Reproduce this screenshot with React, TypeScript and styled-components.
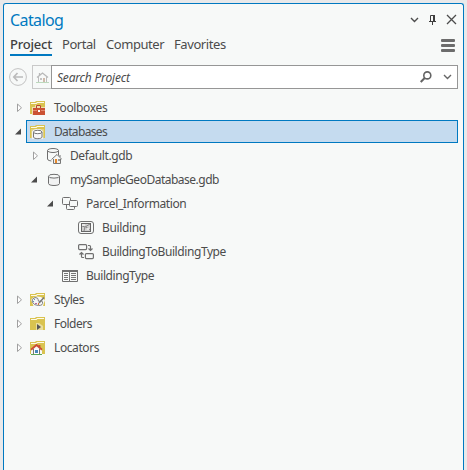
import React from 'react';
import styled, { createGlobalStyle } from 'styled-components';

const GlobalStyle = createGlobalStyle`
  * { box-sizing: border-box; }
  html, body { margin: 0; height: 100%; background: #e9e9ea; overflow: hidden; }
  body { font-family: "Noto Sans", "Open Sans", sans-serif; color: #4c4c4c; }
  #root { height: 100%; }
  svg { display: block; flex: none; }
`;

const Frame = styled.div`
  height: 470px;
  padding: 3px 3px 0 3px;
`;

const Panel = styled.section`
  height: 467px;
  border: 1px solid #0079c1;
  border-bottom: 0;
  border-radius: 3px 3px 0 0;
  background: #f7f9f8;
`;

const TitleBar = styled.header`
  display: flex;
  align-items: center;
  height: 31px;
  padding: 0 6px 0 6px;
`;

const Title = styled.h1`
  flex: 1;
  margin: 0;
  font-size: 16px;
  line-height: 22px;
  font-weight: 400;
  letter-spacing: -0.6px;
  color: #0079c1;
`;

const WindowButtons = styled.div`
  display: flex;
  align-items: center;
  gap: 9px;
`;

const TabBar = styled.nav`
  display: flex;
  height: 23px;
  padding: 0 5px 0 6px;
`;

const Tab = styled.div<{ $width: number; $spacing: number; $active?: boolean }>`
  width: ${p => p.$width}px;
  height: 21px;
  margin-right: 10px;
  white-space: nowrap;
  font-size: 13px;
  line-height: 18px;
  font-weight: ${p => (p.$active ? 500 : 400)};
  letter-spacing: ${p => p.$spacing}px;
  color: ${p => (p.$active ? '#404040' : '#4c4c4c')};
  border-bottom: 2px solid ${p => (p.$active ? '#0079c1' : 'transparent')};
`;

const MenuButton = styled.div`
  margin: 4px 3px 0 auto;
`;

const SearchRow = styled.div`
  display: flex;
  align-items: center;
  height: 24px;
  margin: 7px 5px 7px 5px;
`;

const HomeButton = styled.div`
  display: flex;
  align-items: center;
  justify-content: center;
  width: 19px;
  height: 24px;
  margin-left: 5px;
  border: 1px solid #c9c9c9;
  border-right: 0;
`;

const SearchBox = styled.div`
  display: flex;
  align-items: center;
  flex: 1;
  height: 24px;
  padding: 0 5px;
  border: 1px solid #969696;
  background: #fff;
`;

const Placeholder = styled.span`
  flex: 1;
  padding-top: 1px;
  font-size: 12px;
  line-height: 20px;
  font-style: italic;
  letter-spacing: -0.2px;
  color: #4c4c4c;
`;

const Spacer = styled.div`
  width: 11px;
`;

const Tree = styled.div`
  padding-right: 5px;
`;

const Row = styled.div<{ $depth: number }>`
  display: flex;
  height: 24px;
  padding-left: ${p => 11 + p.$depth * 16}px;
`;

const Toggle = styled.div`
  display: flex;
  align-items: center;
  width: 11px;
`;

const Item = styled.div<{ $selected?: boolean }>`
  display: flex;
  align-items: center;
  flex: 1;
  height: ${p => (p.$selected ? 23 : 24)}px;
  padding-left: 3px;
  border: 1px solid ${p => (p.$selected ? '#0079c1' : 'transparent')};
  background: ${p => (p.$selected ? '#c5dbef' : 'transparent')};
`;

const Label = styled.span<{ $spacing: number }>`
  margin-left: 8px;
  font-size: 12px;
  line-height: 18px;
  letter-spacing: ${p => p.$spacing}px;
  white-space: nowrap;
`;

const Glyph = ({ w = 16, h = 16, children }: { w?: number; h?: number; children: React.ReactNode }) => (
  <svg width={w} height={h} viewBox={`0 0 ${w} ${h}`} fill="none">{children}</svg>
);

const FolderBase = () => (
  <>
    <path d="M0 14V2h5l1-1h9v13z" fill="#d9c350" />
    <path d="M1 3h5l1-1h7v1H7.5L6.5 4H1z" fill="#fffbe6" />
  </>
);

const ToolboxFolder = () => (
  <Glyph><FolderBase />
    <path d="M2 7h3V5h6v2h4v8H2z" fill="#efdfaf" />
    <path d="M3 8h12v7H3z" fill="#cb5234" />
    <path d="M6.5 8V5.5h4V8" stroke="#b84a30" />
    <path d="M3 10.5h4m4 0h4" stroke="#e28a70" />
    <path d="M8 10h2v2H8z" fill="#fff" />
  </Glyph>
);

const Cylinder = () => (
  <>
    <path d="M2.5 4v8.5c0 1.3 2.5 2 5.5 2s5.5-.7 5.5-2V4" fill="#f7f9f8" stroke="#6e6e6e" />
    <ellipse cx="8" cy="4" rx="5.5" ry="2" fill="#f7f9f8" stroke="#6e6e6e" />
  </>
);

const DatabaseFolder = () => (
  <Glyph>
    <FolderBase />
    <path d="M1 5h13v9H1z" fill="#e2d27d" />
    <path d="M2 8c0-4 11-4 11 0v7H2z" fill="#f4f4f4" />
    <path d="M3.5 8v5c0 2.2 8.5 2.2 8.5 0V8" fill="#f7f7f7" stroke="#777" />
    <ellipse cx="7.75" cy="8" rx="4.25" ry="1.7" fill="#fff" stroke="#777" />
  </Glyph>
);

const Database = () => (
  <Glyph>
    <path d="M2.5 4.2v7.3c0 1.3 2.5 2 5.5 2s5.5-.7 5.5-2V4.2" fill="#f1f2f2" stroke="#6e6e6e" />
    <ellipse cx="8" cy="4.2" rx="5.5" ry="1.9" fill="#f7f9f8" stroke="#6e6e6e" />
  </Glyph>
);

const HomeDatabase = () => (
  <Glyph>
    <g transform="translate(-1 -1.5)"><Cylinder /></g>
    <path d="M5 11l6-5 5 5v5H6z" fill="#f7f9f8" />
    <path d="M7.5 11v4.5h7V11" fill="#f0f0f0" stroke="#777" />
    <path d="M5.5 11.5L11 6.5l5 5M14 9V7" stroke="#777" />
    <path d="M9 11h2v4H9z" fill="#e58a2d" />
    <path d="M12 11h2v2h-2z" fill="#999" />
  </Glyph>
);

const Dataset = () => (
  <Glyph>
    <rect x="4.5" y="7.5" width="8" height="6" rx="1" stroke="#707070" />
    <rect x=".5" y="1.5" width="8" height="7" rx="1" fill="#f7f9f8" stroke="#707070" />
    <rect x="7.5" y="4.5" width="8" height="6" rx="1" fill="#f7f9f8" stroke="#707070" />
  </Glyph>
);

const FeatureClass = () => (
  <Glyph>
    <rect x=".5" y="1.5" width="15" height="12" rx="2.5" stroke="#707070" />
    <rect x="3.5" y="3.5" width="9" height="8" fill="#d0d0d0" stroke="#666" />
    <path d="M4 6l3 1 5-3M7 7l-1 4M8 7l4 3" stroke="#858585" />
    <path d="M4 4h3v2H4zM9 8h2v2H9z" fill="#e8e8e8" />
  </Glyph>
);

const Relationship = () => (
  <Glyph>
    <rect x=".6" y=".6" width="8" height="5" rx="1" stroke="#707070" strokeWidth="1.2" />
    <rect x="7.4" y="9.6" width="8" height="5" rx="1" stroke="#707070" strokeWidth="1.2" />
    <path d="M10 1.5h1.5q1 0 1 1V6M10.5 4.5l2 2 2-2M6 13.5H4.5q-1 0-1-1V9M1.5 10.5l2-2 2 2" stroke="#707070" strokeWidth="1.2" />
  </Glyph>
);

const Table = () => (
  <Glyph>
    <path d="M.5 2.5h15v11H.5z" stroke="#707070" />
    <path d="M0 2h16v2H0z" fill="#707070" />
    <path d="M7.5 4v10M2 5.5h4M2 7.5h4M2 9.5h4M2 11.5h4M9 5.5h5M9 7.5h5M9 9.5h5M9 11.5h5" stroke="#777" />
  </Glyph>
);

const StylesFolder = () => (
  <Glyph><FolderBase />
    <path d="M1 8q3-5 10-3l4 3-2 6-9 1z" fill="#f7f9f8" />
    <path d="M5 5.5Q1 7 2.3 10q1.5 3.5 6.2 3.5 5 0 4-3.5-.4-1.7-2.5-.7-2.2.5-1.8-1.6.2-2-3.2-2.2z" fill="#f4f4f4" stroke="#818181" />
    <path d="M9 11l5-5.5" stroke="#777" strokeWidth="1.5" />
    <path d="M4 7h1v1H4zM3 9h1v1H3z" fill="#5f91ba" />
    <path d="M5 11h2v1H5z" fill="#b768a0" /><path d="M8 11h1v2H8z" fill="#d97936" />
  </Glyph>
);

const ProjectFolder = () => (
  <Glyph><FolderBase />
    <path d="M6 7h3l4 3v4H6z" fill="#e9dd9c" /><path d="M7 8l4 3-4 3z" fill="#555" />
  </Glyph>
);

const LocatorFolder = () => (
  <Glyph><FolderBase />
    <path d="M1 10l5-5 6 5v5H1z" fill="#f7f9f8" />
    <path d="M3.5 9v5.5h6V9" fill="#fff" stroke="#777" />
    <path d="M1 9.7L6.5 5l5.5 4.7M9.5 7V5" stroke="#cc4e35" strokeWidth="1.8" />
    <path d="M5 10h3v3H5z" fill="#4689bd" /><path d="M1 14.5h11" stroke="#5da657" />
  </Glyph>
);

const Home = () => (
  <Glyph w={13} h={14}>
    <path d="M2.5 7v5.5h8V7" stroke="#bdbdbd" />
    <path d="M1 7.5L6.5 3 12 7.5M3.5 5V3" stroke="#b8b8b8" strokeWidth="1.3" />
    <path d="M7 8h2v4H7z" fill="#cfb9aa" /><path d="M4 8h2v2H4z" fill="#c3c3c3" />
    <path d="M0 12.5h13" stroke="#bdd9bd" />
  </Glyph>
);

const Back = () => (
  <Glyph w={18} h={18}>
    <circle cx="9" cy="9" r="8.4" stroke="#c2c2c2" />
    <path d="M14 9H5M8.5 5L4.8 9l3.7 4" stroke="#bbb" strokeWidth="1.7" />
  </Glyph>
);

const Chevron = ({ color }: { color: string }) => (
  <Glyph w={9} h={6}><path d="M1 1l3.5 3.5L8 1" stroke={color} strokeWidth="1.4" /></Glyph>
);

const Pin = () => (
  <Glyph w={9} h={12}>
    <path d="M2.5 7V1.5h4V7M1 7.5h7M4.5 8v3" stroke="#3e3e3e" /><path d="M5 1h2v6H5z" fill="#3e3e3e" />
  </Glyph>
);

const Close = () => (
  <Glyph w={11} h={11}><path d="M1 1l9 9M10 1l-9 9" stroke="#4c4c4c" strokeWidth="1.3" /></Glyph>
);

const Menu = () => (
  <Glyph w={14} h={14}>
    <rect width="14" height="3" rx="1" fill="#6c6c6c" />
    <rect y="5" width="14" height="3" rx="1" fill="#6c6c6c" />
    <rect y="10" width="14" height="3" rx="1" fill="#6c6c6c" />
  </Glyph>
);

const Search = () => (
  <Glyph w={12} h={12}>
    <circle cx="7.3" cy="4.4" r="3.5" stroke="#646464" strokeWidth="1.6" />
    <path d="M4.7 7L.7 11" stroke="#646464" strokeWidth="2" />
  </Glyph>
);

const Arrow = ({ state }: { state: 'open' | 'closed' }) => (
  <Glyph w={8} h={10}>
    {state === 'open'
      ? <path d="M6 1.5v6H0z" fill="#4c4c4c" />
      : <path d="M2.5 1v7.5L6.5 4.8z" stroke="#a0a0a0" fill="#fff" />}
  </Glyph>
);

type Node = {
  label: string;
  depth: number;
  icon: React.ComponentType;
  spacing: number;
  state?: 'open' | 'closed';
  selected?: boolean;
};

const nodes: Node[] = [
  { label: 'Toolboxes', depth: 0, icon: ToolboxFolder, spacing: -0.35, state: 'closed' },
  { label: 'Databases', depth: 0, icon: DatabaseFolder, spacing: -0.65, state: 'open', selected: true },
  { label: 'Default.gdb', depth: 1, icon: HomeDatabase, spacing: -0.4, state: 'closed' },
  { label: 'mySampleGeoDatabase.gdb', depth: 1, icon: Database, spacing: -0.5, state: 'open' },
  { label: 'Parcel_Information', depth: 2, icon: Dataset, spacing: -0.4, state: 'open' },
  { label: 'Building', depth: 3, icon: FeatureClass, spacing: -0.35 },
  { label: 'BuildingToBuildingType', depth: 3, icon: Relationship, spacing: -0.42 },
  { label: 'BuildingType', depth: 2, icon: Table, spacing: -0.45 },
  { label: 'Styles', depth: 0, icon: StylesFolder, spacing: -0.45, state: 'closed' },
  { label: 'Folders', depth: 0, icon: ProjectFolder, spacing: -0.5, state: 'closed' },
  { label: 'Locators', depth: 0, icon: LocatorFolder, spacing: -0.4, state: 'closed' },
];

export default function App() {
  return (
    <Frame>
      <GlobalStyle />
      <Panel>
        <TitleBar>
          <Title>Catalog</Title>
          <WindowButtons><Chevron color="#4c4c4c" /><Pin /><Close /></WindowButtons>
        </TitleBar>
        <TabBar>
          <Tab $width={42} $spacing={-0.2} $active>Project</Tab>
          <Tab $width={34} $spacing={-0.45}>Portal</Tab>
          <Tab $width={58} $spacing={-0.45}>Computer</Tab>
          <Tab $width={52} $spacing={-0.42}>Favorites</Tab>
          <MenuButton><Menu /></MenuButton>
        </TabBar>
        <SearchRow>
          <Back />
          <HomeButton><Home /></HomeButton>
          <SearchBox>
            <Placeholder>Search Project</Placeholder>
            <Search />
            <Spacer />
            <Chevron color="#666" />
          </SearchBox>
        </SearchRow>
        <Tree>
          {nodes.map(({ label, depth, icon: Icon, spacing, state, selected }) => (
            <Row key={label} $depth={depth}>
              <Toggle>{state && <Arrow state={state} />}</Toggle>
              <Item $selected={selected}>
                <Icon />
                <Label $spacing={spacing}>{label}</Label>
              </Item>
            </Row>
          ))}
        </Tree>
      </Panel>
    </Frame>
  );
}
